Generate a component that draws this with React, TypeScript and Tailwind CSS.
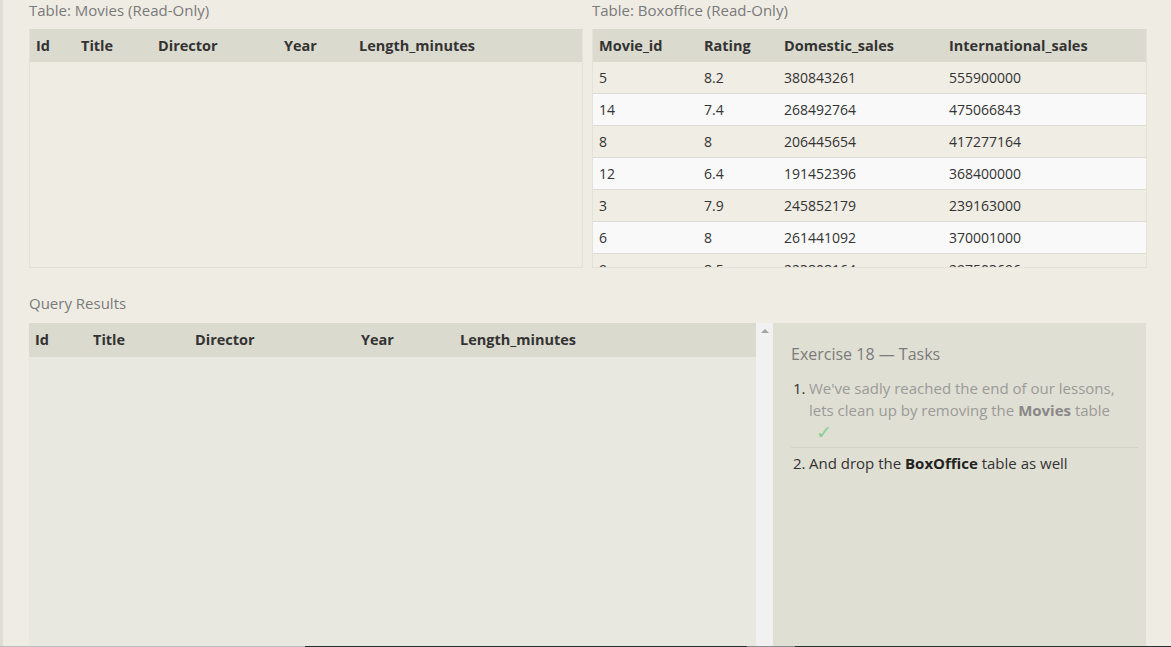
import React from "react";

const font = { fontFamily: '"Open Sans", "Noto Sans", sans-serif' };

const boxoffice = [
    ["5", "8.2", "380843261", "555900000"],
    ["14", "7.4", "268492764", "475066843"],
    ["8", "8", "206445654", "417277164"],
    ["12", "6.4", "191452396", "368400000"],
    ["3", "7.9", "245852179", "239163000"],
    ["6", "8", "261441092", "370001000"],
    ["9", "8.5", "223808164", "297503696"],
    ["11", "8.4", "415004880", "648167031"],
];

const movieCols = ["Id", "Title", "Director", "Year", "Length_minutes"];

function HeaderRow({ cols, grid, h = "h-[33px]" }: { cols: string[]; grid: string; h?: string }) {
    return (
        <div className={`grid ${grid} ${h} items-center bg-[#dbdace] text-[14.5px] font-bold text-[#333]`}>
            {cols.map((c) => (
                <div key={c} className="pl-[6px]">{c}</div>
            ))}
        </div>
    );
}

export default function App() {
    return (
        <div className="flex flex-col h-[647px] w-[1171px] overflow-hidden bg-[#efece4]" style={font}>
            <div className="flex flex-1 min-h-0">
                {/* left edge strip */}
                <div className="w-[3px] bg-[#e0ddd7]" />

                <div className="flex-1 flex flex-col pl-[26px] pr-[24px] min-h-0">
                    {/* top tables */}
                    <div className="flex gap-[9px]">
                        <section className="w-[554px]">
                            <div className="h-[21px] text-[15px] leading-[20px] text-[#7a7a7a]">Table: Movies (Read-Only)</div>
                            <div className="mt-[8px] h-[239px] border border-[#e4e1d9] border-t-0">
                                <HeaderRow cols={movieCols} grid="grid-cols-[45px_77px_126px_75px_1fr]" />
                            </div>
                        </section>

                        <section className="w-[555px]">
                            <div className="h-[21px] text-[15px] leading-[20px] text-[#7a7a7a]">Table: Boxoffice (Read-Only)</div>
                            <div className="mt-[8px] h-[239px] overflow-hidden border border-[#e4e1d9] border-t-0">
                                <HeaderRow
                                    cols={["Movie_id", "Rating", "Domestic_sales", "International_sales"]}
                                    grid="grid-cols-[105px_80px_165px_1fr]"
                                />
                                {boxoffice.map((r, i) => (
                                    <div
                                        key={r[0]}
                                        className={`grid grid-cols-[105px_80px_165px_1fr] h-[32px] items-center border-b border-[#dddbd3] text-[14px] text-[#333] ${i % 2 === 0 ? "bg-[#f0ede5]" : "bg-[#f9f9f9]"}`}
                                    >
                                        {r.map((v, j) => (
                                            <div key={j} className="pl-[6px]">{v}</div>
                                        ))}
                                    </div>
                                ))}
                            </div>
                        </section>
                    </div>

                    {/* query results + tasks */}
                    <div className="mt-[25px] h-[20px] text-[15px] leading-[20px] text-[#7a7a7a]">Query Results</div>
                    <div className="mt-[10px] flex flex-1 min-h-0">
                        <div className="w-[727px] bg-[#e9e8e0]">
                            <HeaderRow cols={movieCols} grid="grid-cols-[58px_102px_166px_99px_1fr]" h="h-[34px]" />
                        </div>
                        <div className="w-[17px] bg-[#f1f1f1] flex justify-center pt-[6px]">
                            <div className="w-0 h-0 border-l-[4px] border-r-[4px] border-b-[4px] border-l-transparent border-r-transparent border-b-[#a3a3a3]" />
                        </div>
                        <div className="w-[373px] bg-[#e0dfd3] pt-[21px] pl-[18px] pr-[8px]">
                            <h2 className="text-[16px] leading-[20px] text-[#7b7b7b]">Exercise 18 — Tasks</h2>
                            <ol className="mt-[13px] text-[15px] leading-[22px]">
                                <li className="flex pb-[3px] border-b border-[#d3d2c6]">
                                    <span className="w-[18px] pl-[2px] text-[#333]">1.</span>
                                    <span className="flex-1 text-[#9a9a9a]">
                                        We've sadly reached the end of our lessons,
                                        <br />
                                        lets clean up by removing the <b className="text-[#888]">Movies</b> table
                                        <br />
                                        <span className="pl-[7px] text-[19px] leading-[22px] font-light text-[#86cf95]">✓</span>
                                    </span>
                                </li>
                                <li className="flex pt-[4px]">
                                    <span className="w-[18px] pl-[2px] text-[#333]">2.</span>
                                    <span className="flex-1 text-[#333]">
                                        And drop the <b className="text-[#222]">BoxOffice</b> table as well
                                    </span>
                                </li>
                            </ol>
                        </div>
                    </div>
                </div>
            </div>

            {/* bottom 1px strip */}
            <div className="flex h-px">
                <div className="w-[305px] bg-[#bdbdbd]" />
                <div className="w-[442px] bg-[#263033]" />
                <div className="w-[48px] bg-[#8a8a8a]" />
                <div className="flex-1 bg-[#263033]" />
            </div>
        </div>
    );
}
